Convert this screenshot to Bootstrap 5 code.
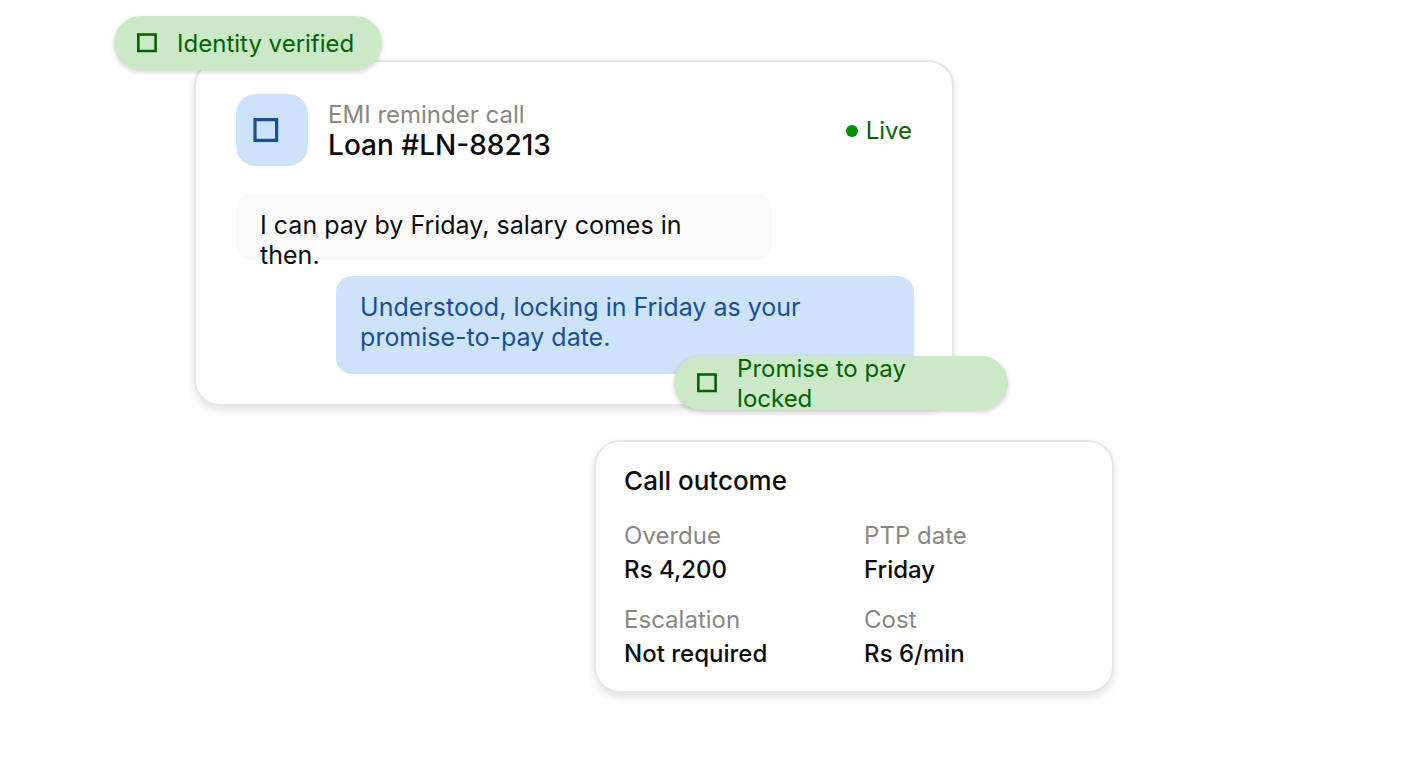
<!DOCTYPE html>
<html lang="en">
<head>
<meta charset="utf-8">
<meta name="viewport" content="width=device-width, initial-scale=1">
<title>EMI reminder call</title>
<link href="https://cdn.jsdelivr.net/npm/bootstrap@5.3.0/dist/css/bootstrap.min.css" rel="stylesheet">
<style>
body{font-family:Inter,"Liberation Sans",sans-serif;font-size:24px;line-height:30px;color:#0b0b0b;background:#fff}
.scene{padding:60px 0 60px 8%}
.stage{max-width:1000px}
.panel{background:#fff;border:2px solid #e6e6e6;border-radius:26px;box-shadow:0 4px 8px rgba(0,0,0,.12)}
.call{width:76%;margin-left:8%;padding:32px 38px 30px 40px}
.outcome{width:52%;margin-left:48%;margin-top:34px;padding:24px 28px 22px}
.avatar{width:72px;height:72px;border-radius:20px;background:#cde2fb;color:#184f95;padding-left:17px}
.muted{color:#898781}
.title{font-size:26px;line-height:30px;font-weight:500}
.loan{font-size:28px}
.live{color:#006300;padding:2px 2px 0 0}
.dot{width:12px;height:12px;background:#008f00}
.bubble{font-size:25px;border-radius:16px;padding:16px 24px}
.theirs{width:536px;max-width:80%;height:66px;margin-top:28px;padding-right:64px;background:#fbfbfb}
.ours{width:578px;max-width:86%;background:#cde2fb;color:#184f95;padding-bottom:22px}
.chip{height:54px;padding:0 22px;gap:20px;border-radius:27px;background:#cbe9c6;color:#006300;box-shadow:0 2px 5px rgba(0,0,0,.18)}
.chip-top{left:-82px;top:-46px;width:268px}
.chip-end{right:-56px;bottom:-6px;width:334px}
.chip span{padding-top:2px}
.chip-end span{max-width:190px}
.facts{--bs-gutter-x:20px;row-gap:20px;margin-top:25px}
.facts dd{font-weight:500;margin:4px 0 0}
</style>
</head>
<body>
<main class="scene">
  <div class="stage">
    <section class="panel call position-relative">
      <div class="chip chip-top position-absolute d-flex align-items-center">
        <svg class="flex-shrink-0" width="21" height="20" viewBox="0 0 21 20" fill="none" stroke="currentColor" stroke-width="2.6" aria-hidden="true"><path d="M2.3 1.5h17.3v16.5H2.3z"/></svg>
        <span>Identity verified</span>
      </div>
      <header class="d-flex align-items-center">
        <div class="avatar d-flex align-items-center flex-shrink-0">
          <svg width="26" height="26" viewBox="0 0 26 26" fill="none" stroke="currentColor" stroke-width="3.2" aria-hidden="true"><path d="M2 2.6h21.6v20.8H2z"/></svg>
        </div>
        <div class="ms-3 ps-1 flex-grow-1">
          <div class="muted">EMI reminder call</div>
          <h1 class="title loan m-0">Loan #LN-88213</h1>
        </div>
        <div class="live d-flex align-items-center gap-2"><span class="dot rounded-circle"></span>Live</div>
      </header>
      <div class="bubble theirs">I can pay by Friday, salary comes in then.</div>
      <div class="bubble ours ms-auto mt-3">Understood, locking in Friday as your promise-to-pay date.</div>
      <div class="chip chip-end position-absolute d-flex align-items-center">
        <svg class="flex-shrink-0" width="21" height="20" viewBox="0 0 21 20" fill="none" stroke="currentColor" stroke-width="2.6" aria-hidden="true"><path d="M2.3 1.5h17.3v16.5H2.3z"/></svg>
        <span>Promise to pay locked</span>
      </div>
    </section>
    <section class="panel outcome">
      <h2 class="title m-0">Call outcome</h2>
      <dl class="facts row mb-0">
        <div class="col-6"><dt class="muted fw-normal">Overdue</dt><dd>Rs 4,200</dd></div>
        <div class="col-6"><dt class="muted fw-normal">PTP date</dt><dd>Friday</dd></div>
        <div class="col-6"><dt class="muted fw-normal">Escalation</dt><dd>Not required</dd></div>
        <div class="col-6"><dt class="muted fw-normal">Cost</dt><dd>Rs 6/min</dd></div>
      </dl>
    </section>
  </div>
</main>
<script src="https://cdn.jsdelivr.net/npm/bootstrap@5.3.0/dist/js/bootstrap.bundle.min.js"></script>
</body>
</html>
